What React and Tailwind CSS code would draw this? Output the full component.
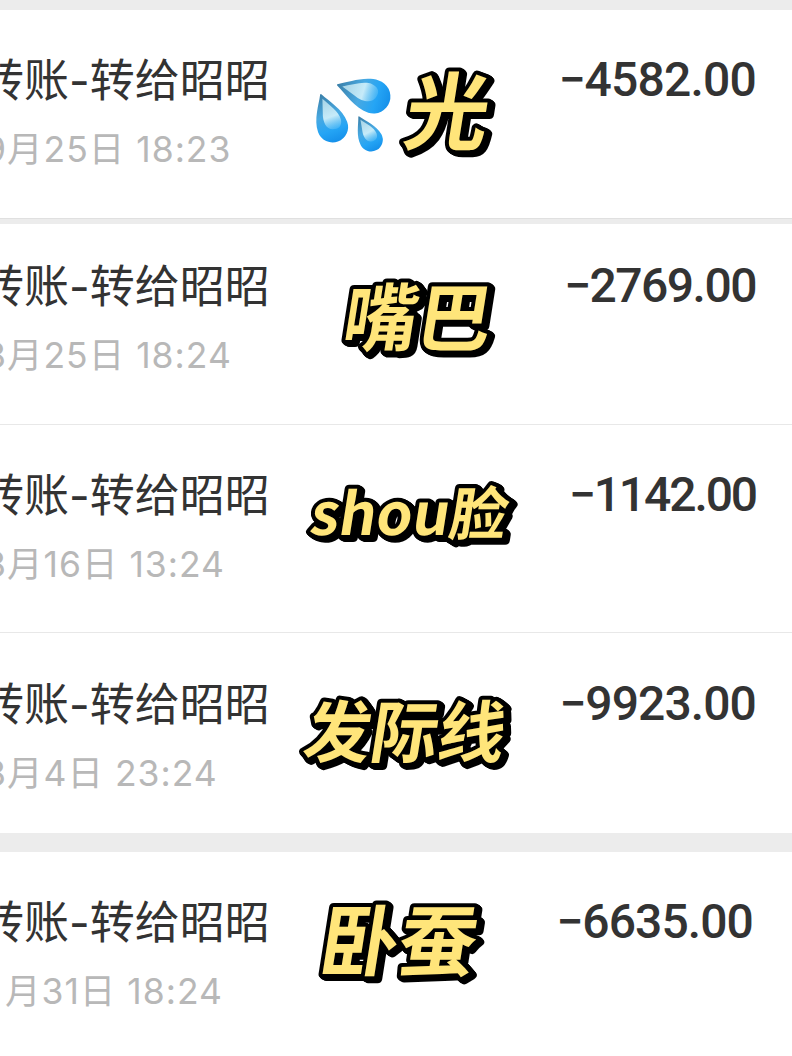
import React from 'react';

const transfers = [
  { id: 1, date: '9月25日 18:23', amount: '−4582.00', row: 'h-[208px] pt-[37px]', dateMargin: '-ml-[16px]', amountStyle: 'pr-[36px] tracking-[-0.8px]', sticker: { text: '光', x: 111, y: 96, size: 84 }, drops: true },
  { id: 2, date: '8月25日 18:24', amount: '−2769.00', row: 'h-[201px] pt-[29px]', dateMargin: '-ml-[16px]', amountStyle: 'pr-[36px] tracking-[-1.5px]', sticker: { text: '嘴巴', x: 50, y: 92, size: 74 } },
  { id: 3, date: '8月16日 13:24', amount: '−1142.00', row: 'h-[208px] pt-[37px]', dateMargin: '-ml-[16px]', amountStyle: 'pr-[36px] tracking-[-2.1px]', sticker: { text: 'shou脸', x: 18, y: 73, size: 58 } },
  { id: 4, date: '8月4日 23:24', amount: '−9923.00', row: 'h-[200px] pt-[38px]', dateMargin: '-ml-[16px]', amountStyle: 'pr-[36px] tracking-[-0.9px]', sticker: { text: '发际线', x: 11, y: 86, size: 67 } },
  { id: 5, date: '月31日 18:24', amount: '−6635.00', row: 'h-[204px] pt-[37px]', dateMargin: 'ml-[5px]', amountStyle: 'pr-[39px] tracking-[-0.9px]', sticker: { text: '卧蚕', x: 27, y: 81, size: 78 } },
];

const Drop = ({ transform }) => (
  <g transform={transform}>
    <path d="M-1 0Q0-2 1 0C5 8 15 20 15 33a15 15 0 0 1-30 0C-15 20-5 8-1 0Z" fill="url(#dropBody)" />
    <path d="M0 4C4 12 11 21 10 29c-1 7-6 8-11 6-5-2-7-9-3-19Z" fill="url(#dropLight)" />
  </g>
);

const SweatDrops = () => (
  <svg className="absolute left-[24px] top-[29px] h-[80px] w-[80px] overflow-visible" viewBox="0 0 80 80">
    <defs>
      <linearGradient id="dropBody" x1="0" y1="0" x2="0" y2="1">
        <stop offset="0" stopColor="#3a7fa8" />
        <stop offset="0.45" stopColor="#48a9e2" />
        <stop offset="0.75" stopColor="#25a5f5" />
        <stop offset="1" stopColor="#1590ea" />
      </linearGradient>
      <linearGradient id="dropLight" x1="0" y1="0" x2="0" y2="1">
        <stop offset="0" stopColor="#a5d3e6" />
        <stop offset="0.6" stopColor="#c6ebf9" />
        <stop offset="1" stopColor="#7fd2fb" stopOpacity="0.3" />
      </linearGradient>
    </defs>
    <Drop transform="translate(24 9) rotate(-72) scale(1.13)" />
    <Drop transform="translate(7 19) rotate(-20) scale(1.03)" />
    <Drop transform="translate(45 41) rotate(-28) scale(0.78)" />
  </svg>
);

const Sticker = ({ item }) => {
  const { text, x, y, size } = item.sticker;

  return (
    <div className="relative w-[250px] shrink-0">
      {item.drops && <SweatDrops />}
      <svg className="h-[130px] w-[250px] overflow-visible [filter:drop-shadow(1px_1px_0_#000)_drop-shadow(2px_1px_0_#000)_drop-shadow(1px_1px_0_#000)]" viewBox="0 0 250 130">
        <text
          transform={`translate(${x} ${y}) skewX(-9)`}
          className="font-['Noto_Sans_CJK_SC',sans-serif] [paint-order:stroke_fill]"
          fontSize={size}
          fontWeight="700"
          fill="#ffe57a"
          stroke="#000"
          strokeWidth="8"
          strokeLinejoin="round"
        >
          {text}
        </text>
      </svg>
    </div>
  );
};

const TransferRow = ({ item }) => (
  <div className={`flex overflow-hidden bg-white ${item.row}`}>
    <div className="w-[290px] shrink-0">
      <div className="mt-[1px] -ml-[21px] whitespace-nowrap text-[45px] leading-[66px] text-[#333]">转账-转给昭昭</div>
      <div className={`mt-[3px] whitespace-nowrap text-[35.5px] leading-[66px] tracking-[1px] text-[#b8b8b8] ${item.dateMargin}`}>
        {item.date}
      </div>
    </div>
    <Sticker item={item} />
    <div className={`ml-auto whitespace-nowrap font-['Roboto',sans-serif] text-[48px] leading-[66px] font-medium text-[#333] ${item.amountStyle}`}>
      {item.amount}
    </div>
  </div>
);

const App = () => {
  return (
    <div className="h-[1056px] w-[792px] overflow-hidden bg-[#ececec] pt-[10px] font-['Inter','Noto_Sans_CJK_SC',sans-serif]">
      <div className="border-b border-[#e0e0e0]">
        <TransferRow item={transfers[0]} />
      </div>
      <div className="mt-[5px] divide-y divide-[#e8e8e8]">
        {transfers.slice(1, 4).map((item) => (
          <TransferRow key={item.id} item={item} />
        ))}
      </div>
      <div className="mt-[19px]">
        <TransferRow item={transfers[4]} />
      </div>
    </div>
  );
};

export default App;
